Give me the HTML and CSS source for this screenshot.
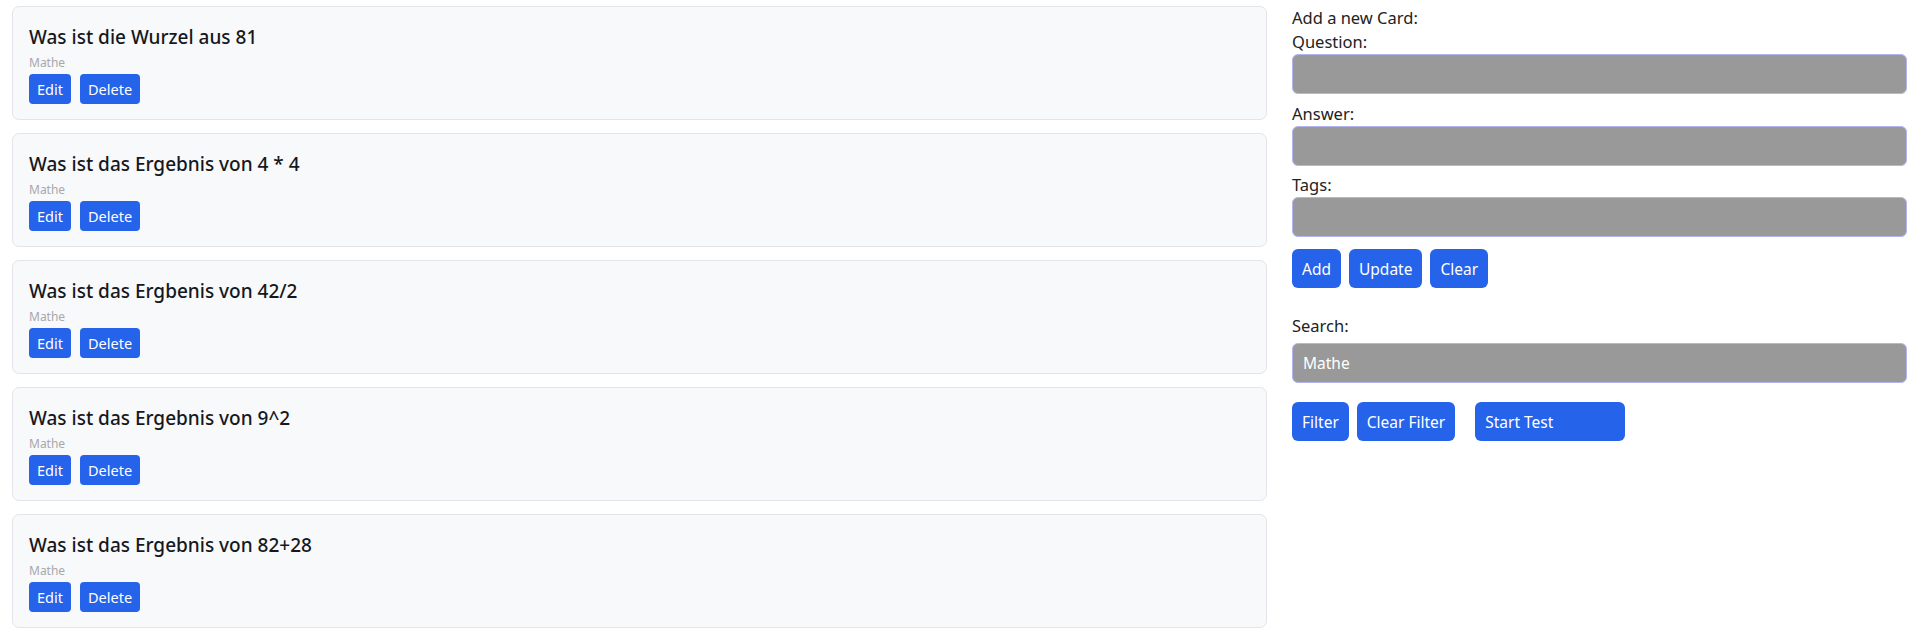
FILE: index.html
```html
<!DOCTYPE html>
<html lang="de">
<head>
<meta charset="utf-8">
<title>Cards</title>
<link rel="stylesheet" href="styles.css">
</head>
<body>
<div class="layout">
  <main class="cards">
    <div class="card">
      <h2 class="card-title">Was ist die Wurzel aus 81</h2>
      <div class="card-tag">Mathe</div>
      <div class="card-actions"><button class="btn-sm">Edit</button><button class="btn-sm">Delete</button></div>
    </div>
    <div class="card">
      <h2 class="card-title">Was ist das Ergebnis von 4 * 4</h2>
      <div class="card-tag">Mathe</div>
      <div class="card-actions"><button class="btn-sm">Edit</button><button class="btn-sm">Delete</button></div>
    </div>
    <div class="card">
      <h2 class="card-title">Was ist das Ergbenis von 42/2</h2>
      <div class="card-tag">Mathe</div>
      <div class="card-actions"><button class="btn-sm">Edit</button><button class="btn-sm">Delete</button></div>
    </div>
    <div class="card">
      <h2 class="card-title">Was ist das Ergebnis von 9^2</h2>
      <div class="card-tag">Mathe</div>
      <div class="card-actions"><button class="btn-sm">Edit</button><button class="btn-sm">Delete</button></div>
    </div>
    <div class="card">
      <h2 class="card-title">Was ist das Ergebnis von 82+28</h2>
      <div class="card-tag">Mathe</div>
      <div class="card-actions"><button class="btn-sm">Edit</button><button class="btn-sm">Delete</button></div>
    </div>
  </main>
  <aside class="panel">
    <div class="label">Add a new Card:</div>
    <div class="label">Question:</div>
    <input class="field" type="text">
    <div class="label">Answer:</div>
    <input class="field" type="text">
    <div class="label">Tags:</div>
    <input class="field" type="text">
    <div class="row row-form">
      <button class="btn">Add</button>
      <button class="btn">Update</button>
      <button class="btn">Clear</button>
    </div>
    <div class="label label-search">Search:</div>
    <input class="field field-search" type="text" value="Mathe">
    <div class="row row-filter">
      <button class="btn">Filter</button>
      <button class="btn">Clear Filter</button>
      <button class="btn btn-test">Start Test</button>
    </div>
  </aside>
</div>
</body>
</html>
```

FILE: styles.css
```css
* { box-sizing: border-box; }
body {
  margin: 0;
  font-family: "Noto Sans", "Open Sans", sans-serif;
  color: #1f2328;
  background: #fff;
}
.layout {
  display: flex;
  gap: 25px;
  padding: 6px 11px 0 12px;
}
.cards {
  width: 1255px;
  flex: none;
  display: flex;
  flex-direction: column;
  gap: 13px;
}
.card {
  background: #f8f9fb;
  border: 1px solid #e3e5e8;
  border-radius: 7px;
  padding: 16px 16px 15px 16px;
  height: 114px;
}
.card-title {
  margin: 0;
  font-size: 19px;
  font-weight: 500;
  line-height: 28px;
  color: #16181d;
}
.card-tag {
  margin-top: 4px;
  font-size: 12px;
  line-height: 16px;
  color: #a6a8ab;
}
.card-actions {
  margin-top: 3px;
  display: flex;
  gap: 9px;
}
.btn-sm {
  font-family: inherit;
  background: #2563eb;
  color: #fff;
  border: none;
  border-radius: 4px;
  height: 30px;
  padding: 0 8px;
  font-size: 14.5px;
}
.panel {
  flex: 1;
  display: flex;
  flex-direction: column;
}
.label {
  font-size: 16.5px;
  line-height: 24px;
  color: #222;
}
.field {
  display: block;
  width: 100%;
  height: 40px;
  background: #999999;
  border: 1px solid #b3b5ec;
  border-radius: 6px;
  margin-bottom: 7.5px;
  font-family: inherit;
  font-size: 15.5px;
  color: #fff;
  padding: 0 10px;
}
.row {
  display: flex;
  gap: 8px;
}
.row-form { margin-top: 4.5px; }
.label-search { margin-top: 26px; margin-bottom: 5px; }
.field-search { margin-bottom: 19px; }
.btn {
  font-family: inherit;
  background: #2563eb;
  color: #fff;
  border: none;
  border-radius: 6px;
  height: 39px;
  padding: 0 10px;
  font-size: 15.5px;
}
.btn-test {
  margin-left: 12px;
  width: 150px;
  text-align: left;
}
```
